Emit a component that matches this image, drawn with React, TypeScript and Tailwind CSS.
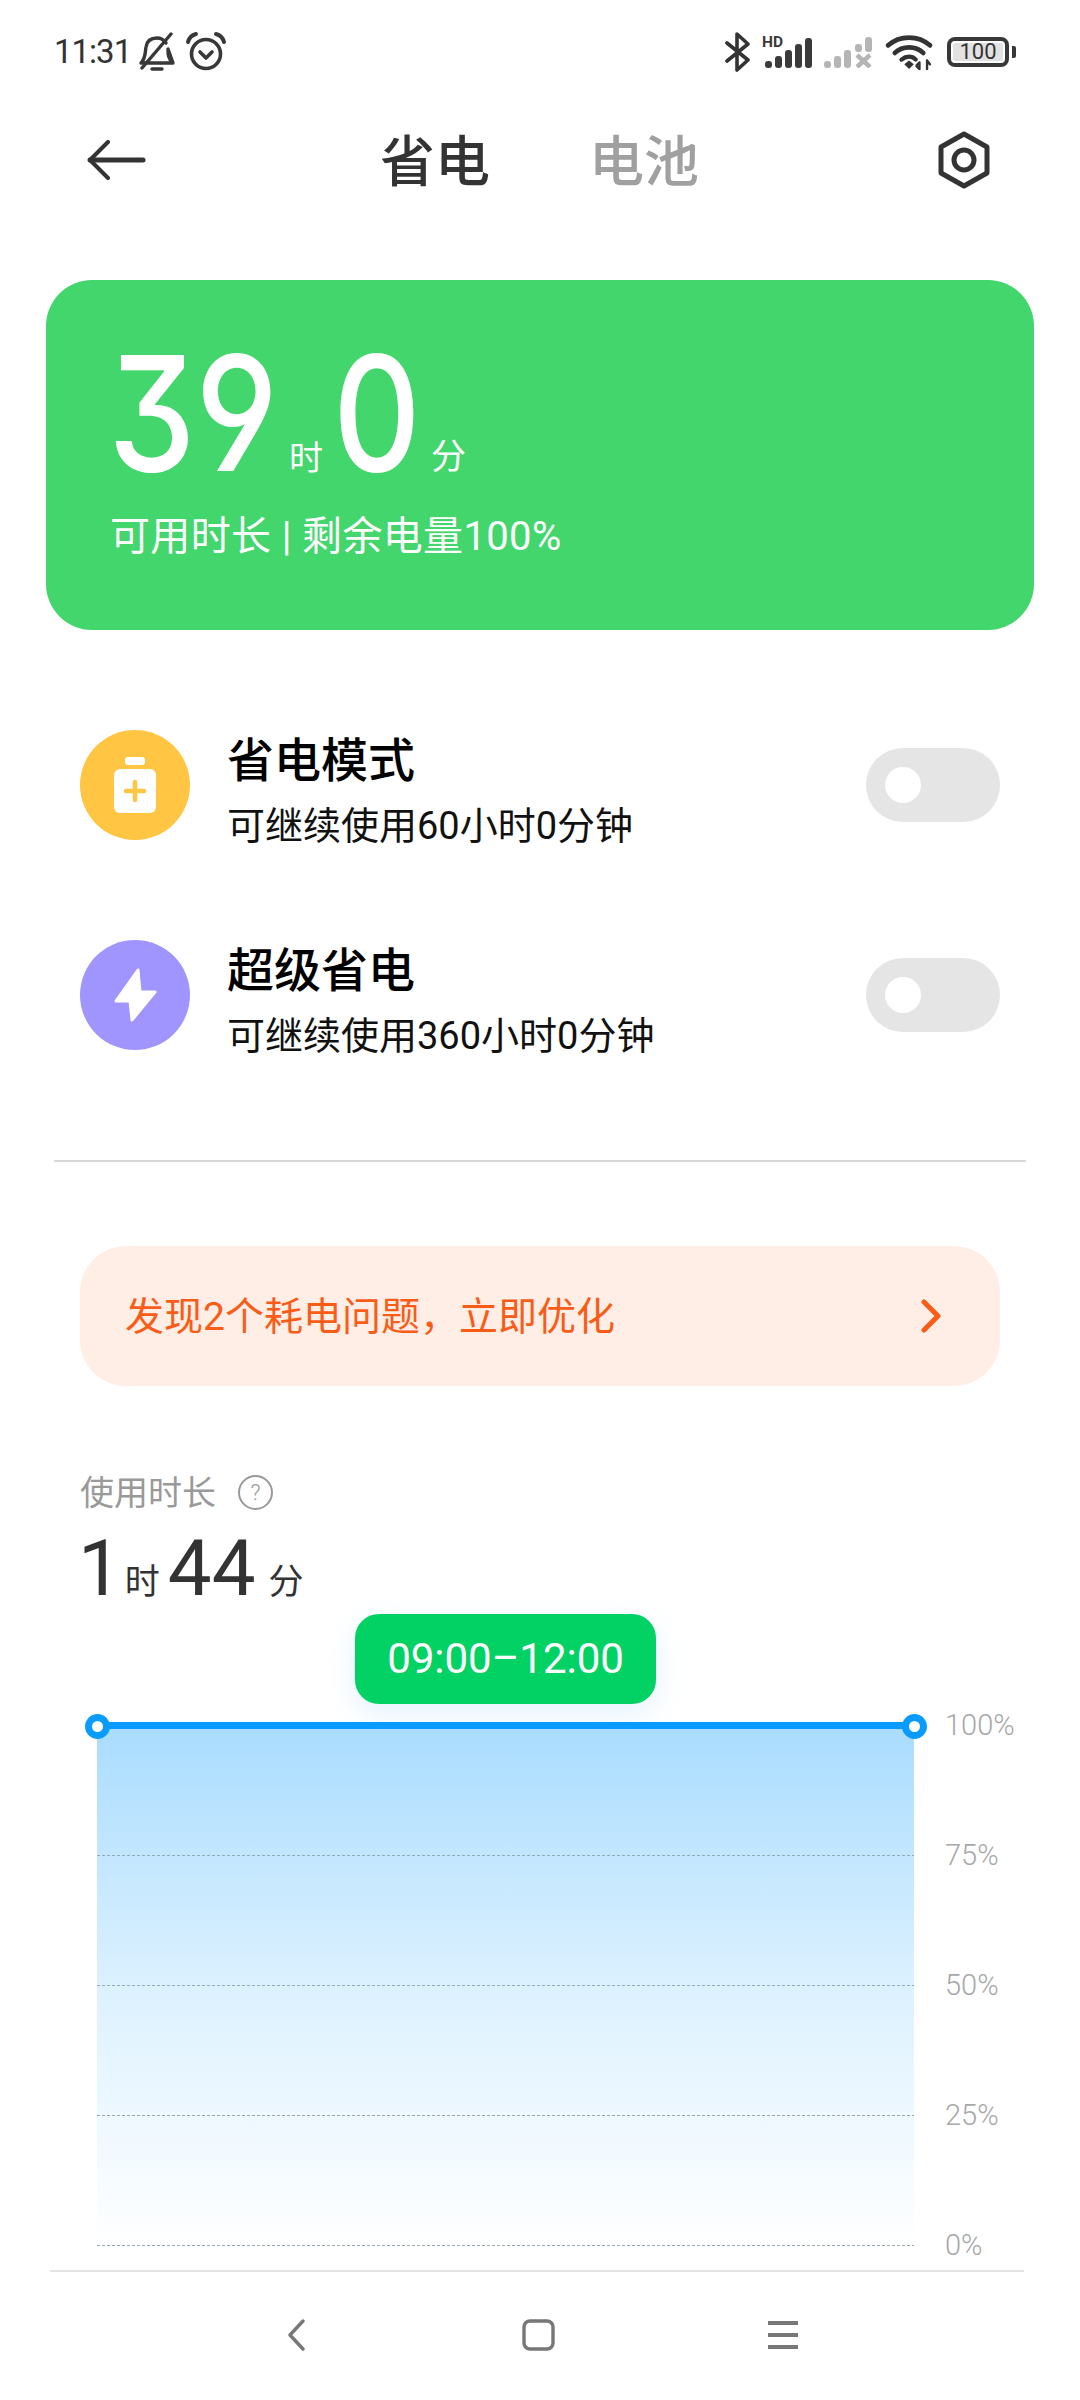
const cjk = "font-['Roboto','Noto_Sans_CJK_SC',sans-serif]"

function StatusIcons() {
  return (
    <div className="flex items-center">
      {/* bluetooth */}
      <svg width="26" height="40" viewBox="0 0 26 40" fill="none" stroke="#333" strokeWidth="3.6" strokeLinejoin="round" strokeLinecap="round">
        <path d="M2 11 L23 28 L12 38 V2 L23 12 L2 29" />
      </svg>
      {/* SIM 1 */}
      <svg width="50" height="32" viewBox="0 0 50 32" className="ml-[11px] overflow-visible" fill="#3a3a3a">
        <text x="0" y="11" fontSize="15.5" fontWeight="700" fontFamily="Roboto" fill="#3a3a3a">HD</text>
        <rect x="3" y="25" width="7" height="7" rx="3" />
        <rect x="13" y="20" width="7" height="12" rx="3" />
        <rect x="23" y="14" width="7" height="18" rx="3" />
        <rect x="33" y="8" width="7" height="24" rx="3" />
        <rect x="43" y="2" width="7" height="30" rx="3" />
      </svg>
      {/* SIM 2 */}
      <svg width="48" height="32" viewBox="0 0 48 32" className="ml-[12px]" fill="#b5b5b5">
        <rect x="0" y="25" width="7" height="7" rx="3" />
        <rect x="10" y="20" width="7" height="12" rx="3" />
        <rect x="20" y="14" width="7" height="18" rx="3" />
        <rect x="31" y="8" width="7" height="8" rx="3" />
        <rect x="41" y="1" width="7" height="15" rx="3" />
        <path d="M33 19 L46 31 M46 19 L33 31" stroke="#b5b5b5" strokeWidth="4.5" />
      </svg>
      {/* wifi */}
      <svg width="50" height="36" viewBox="0 0 52 38" className="ml-[13px]" fill="none" stroke="#333" strokeLinecap="round">
        <path d="M3 12 C15 1 35 1 47 12" strokeWidth="5" />
        <path d="M10 20 C18 12 32 12 40 20" strokeWidth="5" />
        <path d="M17 27 C22 23 28 23 32 27" strokeWidth="4.5" />
        <path d="M20 32 L25 28 L30 32 L25 37 Z" fill="#333" stroke="none" />
        <path d="M36 30 V37 M44 28 V37 M33 33 L36 30 M36 37 L33 34 M44 28 L47 32" strokeWidth="2.5" />
      </svg>
      {/* battery */}
      <div className="ml-[12px] flex items-center">
        <div className="flex h-[30px] w-[62px] items-center justify-center rounded-[8px] border-[4px] border-[#383838] p-[2px]">
          <div className="flex h-full w-full items-center justify-center rounded-[3px] bg-[#e2e2e2] text-[22px] leading-none text-[#333]">100</div>
        </div>
        <div className="ml-[3px] h-[12px] w-[4px] rounded-r-[2px] bg-[#383838]" />
      </div>
    </div>
  )
}

function PowerRow({ title, sub, color, icon }: { title: string; sub: string; color: string; icon: React.ReactNode }) {
  return (
    <div className="flex h-[110px] items-center pr-[80px] pl-[80px]">
      <div className={`flex h-[110px] w-[110px] shrink-0 items-center justify-center rounded-full ${color}`}>{icon}</div>
      <div className="ml-[37px] flex-1 pt-[9px]">
        <div className="text-[47px] leading-[60px] font-medium text-black">{title}</div>
        <div className="mt-[12px] text-[38px] leading-[46px] text-[#111]">{sub}</div>
      </div>
      <div className="flex h-[74px] w-[134px] items-center rounded-full bg-[#e5e5e5] pl-[19px]">
        <div className="h-[36px] w-[36px] rounded-full bg-white" />
      </div>
    </div>
  )
}

function Grid({ label }: { label: string }) {
  return (
    <div className="flex h-0 items-center">
      <div className="h-px w-[817px] bg-[repeating-linear-gradient(90deg,#94a9b8_0_3px,transparent_3px_5px)]" />
      <span className="ml-[31px] text-[29px] font-light text-[#a8a8a8]">{label}</span>
    </div>
  )
}

export default function App() {
  return (
    <div className={`relative flex h-[2400px] w-[1080px] flex-col overflow-hidden bg-white ${cjk}`}>
      {/* Status bar */}
      <div className="flex h-[104px] items-center justify-between pr-[64px] pl-[54px]">
        <div className="flex items-center">
          <span className="text-[33px] tracking-[-1px] text-[#333]">11:31</span>
          <svg width="38" height="40" viewBox="0 0 38 40" className="ml-[7px]" fill="none" stroke="#383838" strokeWidth="3.4" strokeLinecap="round" strokeLinejoin="round">
            <path d="M3 31 C8 26 7 20 8 15 C9 8 14 6 19 6 C23 6 26 8 28 11 M30 17 C30 22 30 27 35 31 Z M3 31 H35" />
            <path d="M14 37 H24" />
            <path d="M33 2 L4 36" />
          </svg>
          <svg width="42" height="42" viewBox="0 0 42 42" className="ml-[9px]" fill="none" stroke="#383838" strokeWidth="3.6" strokeLinecap="round" strokeLinejoin="round">
            <circle cx="21" cy="23" r="14.5" />
            <path d="M15 21 L21 27 L27 21" />
            <path d="M3 11 C4 7 7 4 11 3 M39 11 C38 7 35 4 31 3" strokeWidth="4" />
          </svg>
        </div>
        <StatusIcons />
      </div>

      {/* Header */}
      <div className="relative flex h-[112px] items-center">
        <svg width="59" height="40" viewBox="0 0 59 40" className="absolute left-[87px]" fill="none" stroke="#333" strokeLinecap="round" strokeLinejoin="round">
          <path d="M21 2 L3 20 L21 38" strokeWidth="4" />
          <path d="M3 20 H56" strokeWidth="5" />
        </svg>
        <div className="mt-[4px] ml-[380px] flex items-center">
          <span className="text-[55px] font-medium text-[#333]">省电</span>
          <span className="ml-[99px] text-[55px] font-medium text-[#a0a0a0]">电池</span>
        </div>
        <svg width="54" height="58" viewBox="0 0 54 58" className="absolute left-[937px]" fill="none" stroke="#333" strokeWidth="5" strokeLinejoin="round">
          <path d="M27 3 L50 16 V42 L27 55 L4 42 V16 Z" />
          <circle cx="27" cy="29" r="10" />
        </svg>
      </div>

      {/* Battery card */}
      <div className="mx-[46px] mt-[64px] h-[350px] rounded-[46px] bg-[#43d66c] pt-[60px] pl-[62px] text-white">
        <div className="flex h-[146px] items-end">
          <span className="inline-block w-[170px] origin-left scale-x-[.87] font-['Inter'] text-[160px] leading-[146px] font-medium [font-feature-settings:'cv09','cv04']">39</span>
          <span className="mb-[10px] ml-[11px] text-[34px] leading-[36px]">时</span>
          <span className="ml-[10px] inline-block w-[86px] origin-left scale-x-[.85] font-['Inter'] text-[160px] leading-[146px] font-medium">0</span>
          <span className="mb-[10px] ml-[12px] text-[35px] leading-[36px]">分</span>
        </div>
        <div className="mt-[26px] ml-[2px] text-[40px] leading-[50px] tracking-[0.35px]">可用时长 | 剩余电量100%</div>
      </div>

      {/* Modes */}
      <div className="mt-[100px] flex flex-col gap-[100px]">
        <PowerRow
          title="省电模式"
          sub="可继续使用60小时0分钟"
          color="bg-[#ffc543]"
          icon={
            <svg width="44" height="56" viewBox="0 0 44 56" fill="#fff">
              <rect x="12" y="0" width="20" height="8" rx="3" />
              <rect x="1" y="12" width="42" height="44" rx="6" />
              <path d="M22 25 V43 M13 34 H31" stroke="#ffc543" strokeWidth="4.5" strokeLinecap="round" />
            </svg>
          }
        />
        <PowerRow
          title="超级省电"
          sub="可继续使用360小时0分钟"
          color="bg-[#a094ff]"
          icon={
            <svg width="44" height="54" viewBox="0 0 44 54" fill="#fff" stroke="#fff" strokeWidth="3" strokeLinejoin="round">
              <path d="M25 2 L3 33 H17 L19 52 L42 24 H27 Z" />
            </svg>
          }
        />
      </div>

      <div className="mx-[54px] mt-[110px] h-[1.5px] bg-[#d8d8d8]" />

      {/* Optimize banner */}
      <div className="mx-[80px] mt-[84px] flex h-[140px] items-center justify-between rounded-[46px] bg-[#ffeee6] pr-[58px] pl-[45px]">
        <span className="mt-[3px] text-[39px] text-[#f95c16]">发现2个耗电问题，立即优化</span>
        <svg width="22" height="34" viewBox="0 0 22 34" fill="none" stroke="#f95c16" strokeWidth="5" strokeLinecap="round" strokeLinejoin="round">
          <path d="M4 3 L18 17 L4 31" />
        </svg>
      </div>

      {/* Usage */}
      <div className="mt-[87px] flex items-center pl-[80px]">
        <span className="text-[34px] leading-[40px] text-[#999]">使用时长</span>
        <span className="ml-[22px] flex h-[35px] w-[35px] items-center justify-center rounded-full border-2 border-[#999] text-[22px] leading-none font-light text-[#999]">?</span>
      </div>
      <div className="mt-[24px] flex h-[64px] items-end pl-[78px] text-[#333]">
        <span className="text-[78px] leading-[64px]">1</span>
        <span className="ml-[3px] text-[35px] leading-[36px]">时</span>
        <span className="ml-[8px] text-[78px] leading-[64px]">44</span>
        <span className="ml-[13px] text-[35px] leading-[36px]">分</span>
      </div>

      {/* Chart */}
      <div className="mt-[13px] flex h-[90px] items-start pl-[355px]">
        <div className="flex h-[90px] w-[301px] items-center justify-center rounded-[24px] bg-[#02d264] text-[42px] text-white shadow-[0_10px_30px_rgba(120,190,255,0.2)]">
          09:00–12:00
        </div>
      </div>
      <div className="relative mt-[22px] ml-[97px] h-[520px]">
        <div className="absolute top-0 left-0 h-[520px] w-[817px] bg-gradient-to-b from-[#a9dcff] via-[#dcf1ff] to-white" />
        <div className="relative flex h-full flex-col justify-between">
          <div className="flex h-0 items-center">
            <div className="h-[7px] w-[817px] bg-[#0a9bff]" />
            <span className="ml-[31px] text-[29px] font-light text-[#a8a8a8]">100%</span>
          </div>
          <Grid label="75%" />
          <Grid label="50%" />
          <Grid label="25%" />
          <Grid label="0%" />
        </div>
        <div className="absolute top-[-12px] left-[-12px] h-[25px] w-[25px] rounded-full border-[7px] border-[#0a9bff] bg-white" />
        <div className="absolute top-[-12px] left-[805px] h-[25px] w-[25px] rounded-full border-[7px] border-[#0a9bff] bg-white" />
      </div>

      {/* Nav bar */}
      <div className="mt-[24px] ml-[50px] flex h-[130px] w-[974px] items-start border-t-2 border-[#e4e4e4] pt-[47px]">
        <svg width="18" height="32" viewBox="0 0 18 32" className="ml-[237px]" fill="none" stroke="#777" strokeWidth="3.4" strokeLinecap="round" strokeLinejoin="round">
          <path d="M16 2 L3 16 L16 30" />
        </svg>
        <svg width="33" height="32" viewBox="0 0 33 32" className="ml-[217px]" fill="none" stroke="#777" strokeWidth="3.4">
          <rect x="2" y="2" width="29" height="28" rx="6" />
        </svg>
        <svg width="30" height="32" viewBox="0 0 30 32" className="ml-[213px]" fill="none" stroke="#777" strokeWidth="4">
          <path d="M0 4 H30 M0 16 H30 M0 28 H30" />
        </svg>
      </div>
    </div>
  )
}
